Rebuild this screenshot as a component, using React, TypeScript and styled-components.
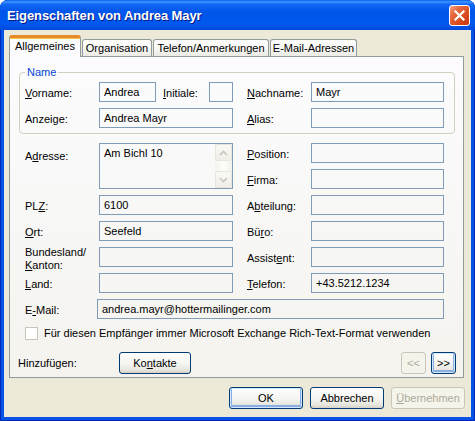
import React from "react";
import styled, { createGlobalStyle, css } from "styled-components";

const GlobalStyle = createGlobalStyle`
  html, body {
    margin: 0;
    padding: 0;
    background: #ffffff;
  }
  body {
    font-family: "Liberation Sans", Arial, sans-serif;
    font-size: 11px;
    line-height: 13px;
    color: #000;
  }
  * { box-sizing: border-box; }
`;

const Window = styled.div`
  width: 475px;
  height: 421px;
  display: flex;
  flex-direction: column;
  background: #0553e6;
  border-radius: 8px 8px 0 0;
  overflow: hidden;
  box-shadow: inset 0 0 0 1px #0029b8;
`;

const TitleBar = styled.div`
  height: 30px;
  flex: none;
  display: flex;
  align-items: center;
  padding: 1px 5px 0 7px;
  background: linear-gradient(
    180deg,
    #0a5ce6 0%,
    #3d95ff 6%,
    #1468f5 14%,
    #0055ea 40%,
    #0058ee 80%,
    #0048dc 100%
  );
`;

const Title = styled.span`
  font-family: "Liberation Sans", Arial, sans-serif;
  font-weight: bold;
  font-size: 13px;
  color: #ffffff;
  text-shadow: 1px 1px 0 #0a1883;
  letter-spacing: -0.1px;
`;

const CloseButton = styled.div`
  margin-left: auto;
  width: 21px;
  height: 21px;
  border: 1px solid #ffffff;
  border-radius: 3px;
  background: linear-gradient(135deg, #f0a589 0%, #e4683f 30%, #d9471c 70%, #c23a12 100%);
  display: flex;
  align-items: center;
  justify-content: center;
`;

const Body = styled.div`
  flex: 1;
  margin: 0 4px 4px;
  padding: 5px 7px 7px 5px;
  background: #ece9d8;
  display: flex;
  flex-direction: column;
`;

const TabStrip = styled.div`
  display: flex;
  align-items: flex-end;
  gap: 1px;
  height: 21px;
  position: relative;
  z-index: 1;
`;

const Tab = styled.div<{ $active?: boolean; $w: number }>`
  width: ${(p) => p.$w}px;
  display: flex;
  justify-content: center;
  border: 1px solid #919b9c;
  border-bottom: none;
  border-radius: 3px 3px 0 0;
  white-space: nowrap;
  ${(p) =>
    p.$active
      ? css`
          height: 22px;
          margin-bottom: -1px;
          align-items: flex-start;
          padding-top: 2px;
          background: #fcfcfe;
          border-top: 3px solid #e68b2c;
          box-shadow: inset 0 1px 0 #ffc73c;
        `
      : css`
          height: 17px;
          align-items: center;
          background: linear-gradient(180deg, #ffffff 0%, #f7f7f4 50%, #ecebe6 100%);
        `}
`;

const Panel = styled.div`
  border: 1px solid #919b9c;
  background: linear-gradient(180deg, #fcfcfe 0%, #f4f3ee 100%);
  display: flex;
  flex-direction: column;
  padding-bottom: 3px;
`;

const GroupBox = styled.div`
  position: relative;
  margin: 15px 8px 0 9px;
  border: 1px solid #d0d0bf;
  border-radius: 4px;
  padding: 9px 0 5px 5px;
`;

const GroupTitle = styled.span`
  position: absolute;
  top: -7px;
  left: 5px;
  padding: 0 2px;
  color: #0046d5;
  background: #fbfbfc;
`;

const FieldGrid = styled.div<{ $outside?: boolean }>`
  display: grid;
  grid-template-columns: 74px 134px 78px 133px;
  grid-auto-rows: 20px;
  row-gap: 6px;
  align-items: center;
  ${(p) =>
    p.$outside &&
    css`
      margin: 9px 0 0 15px;
    `}
`;

const Label = styled.div<{ $right?: boolean; $top?: number }>`
  grid-column: ${(p) => (p.$right ? 3 : 1)};
  padding-left: ${(p) => (p.$right ? 14 : 0)}px;
  white-space: nowrap;
  ${(p) =>
    p.$top !== undefined
      ? css`
          align-self: start;
          margin-top: ${p.$top}px;
        `
      : css`
          padding-top: 2px;
        `}
`;

const Field = styled.div<{ $right?: boolean; $wide?: boolean; $w?: number }>`
  grid-column: ${(p) => (p.$wide ? "2 / 5" : p.$right ? "4" : "2")};
  ${(p) =>
    p.$wide &&
    css`
      margin-left: -2px;
    `}
  width: ${(p) => (p.$w ? `${p.$w}px` : "auto")};
  height: 20px;
  border: 1px solid #7f9db9;
  padding: 0 4px;
  display: flex;
  align-items: center;
  white-space: nowrap;
  overflow: hidden;
`;

const NameCell = styled.div`
  grid-column: 2;
  display: flex;
  align-items: center;
`;

const InlineLabel = styled.span`
  margin-left: 7px;
  padding-top: 2px;
`;

const PushRight = styled.div`
  margin-left: auto;
`;

const AddressBox = styled.div`
  grid-column: 2;
  grid-row: span 2;
  align-self: stretch;
  border: 1px solid #7f9db9;
  display: flex;
`;

const AddressText = styled.div`
  flex: 1;
  padding: 3px 4px;
`;

const ScrollBar = styled.div`
  width: 17px;
  display: flex;
  flex-direction: column;
  justify-content: space-between;
  background: linear-gradient(90deg, #f3f2ec 0%, #fdfdfb 50%, #f3f2ec 100%);
`;

const ScrollButton = styled.div`
  width: 17px;
  height: 17px;
  border: 1px solid #e8e6dc;
  border-radius: 2px;
  background: linear-gradient(180deg, #f9f9f6 0%, #efeee8 100%);
  display: flex;
  align-items: center;
  justify-content: center;
`;

const CheckRow = styled.div`
  display: flex;
  align-items: center;
  gap: 6px;
  height: 13px;
  margin: 8px 0 0 15px;
`;

const CheckBox = styled.span`
  width: 13px;
  height: 13px;
  border: 1px solid #c8c6ba;
  background: #ffffff;
  flex: none;
`;

const ActionRow = styled.div`
  display: flex;
  align-items: center;
  height: 22px;
  margin-top: 12px;
  padding: 0 7px 0 8px;
`;

const AddLabel = styled.span`
  width: 101px;
`;

const NavGroup = styled.div`
  margin-left: auto;
  display: flex;
  gap: 5px;
`;

const Button = styled.div<{ $w: number; $default?: boolean; $disabled?: boolean }>`
  width: ${(p) => p.$w}px;
  height: 22px;
  border: 1px solid #003c74;
  border-radius: 3px;
  background: linear-gradient(180deg, #ffffff 0%, #f4f4f0 55%, #e6e5dd 85%, #d6d0c5 100%);
  display: flex;
  align-items: center;
  justify-content: center;
  white-space: nowrap;
  ${(p) =>
    p.$default &&
    css`
      box-shadow: inset 0 0 0 1px #cee7ff, inset 0 -1px 0 2px #89ade4;
    `}
  ${(p) =>
    p.$disabled &&
    css`
      border-color: #c9c7ba;
      background: #f5f4ea;
      color: #aca899;
    `}
`;

const Footer = styled.div`
  display: flex;
  justify-content: flex-end;
  gap: 7px;
  margin: 9px -1px 0 0;
`;

const Arrow = ({ up }: { up?: boolean }) => (
  <svg width="9" height="6" viewBox="0 0 9 6">
    <path
      d={up ? "M1 5 L4.5 1.5 L8 5" : "M1 1 L4.5 4.5 L8 1"}
      fill="none"
      stroke="#c9c7bb"
      strokeWidth="1.6"
    />
  </svg>
);

const App = () => {
  return (
    <>
      <GlobalStyle />
      <Window>
        <TitleBar>
          <Title>Eigenschaften von Andrea Mayr</Title>
          <CloseButton>
            <svg width="13" height="13" viewBox="0 0 13 13">
              <path d="M2.5 2.5 L10.5 10.5 M10.5 2.5 L2.5 10.5" stroke="#ffffff" strokeWidth="2.2" strokeLinecap="square" />
            </svg>
          </CloseButton>
        </TitleBar>
        <Body>
          <TabStrip>
            <Tab $active $w={72}>Allgemeines</Tab>
            <Tab $w={70}>Organisation</Tab>
            <Tab $w={116}>Telefon/Anmerkungen</Tab>
            <Tab $w={87}>E-Mail-Adressen</Tab>
          </TabStrip>
          <Panel>
            <GroupBox>
              <GroupTitle>Name</GroupTitle>
              <FieldGrid>
                <Label><u>V</u>orname:</Label>
                <NameCell>
                  <Field $w={57}>Andrea</Field>
                  <InlineLabel><u>I</u>nitiale:</InlineLabel>
                  <PushRight>
                    <Field $w={24} />
                  </PushRight>
                </NameCell>
                <Label $right><u>N</u>achname:</Label>
                <Field $right>Mayr</Field>
                <Label>Anzeige:</Label>
                <Field>Andrea Mayr</Field>
                <Label $right><u>A</u>lias:</Label>
                <Field $right />
              </FieldGrid>
            </GroupBox>
            <FieldGrid $outside>
              <Label $top={7}>A<u>d</u>resse:</Label>
              <AddressBox>
                <AddressText>Am Bichl 10</AddressText>
                <ScrollBar>
                  <ScrollButton><Arrow up /></ScrollButton>
                  <ScrollButton><Arrow /></ScrollButton>
                </ScrollBar>
              </AddressBox>
              <Label $right><u>P</u>osition:</Label>
              <Field $right />
              <Label $right><u>F</u>irma:</Label>
              <Field $right />
              <Label>PL<u>Z</u>:</Label>
              <Field>6100</Field>
              <Label $right>A<u>b</u>teilung:</Label>
              <Field $right />
              <Label><u>O</u>rt:</Label>
              <Field>Seefeld</Field>
              <Label $right>Bü<u>r</u>o:</Label>
              <Field $right />
              <Label $top={-1}>
                Bundesland/
                <br />
                <u>K</u>anton:
              </Label>
              <Field />
              <Label $right>Assist<u>e</u>nt:</Label>
              <Field $right />
              <Label><u>L</u>and:</Label>
              <Field />
              <Label $right><u>T</u>elefon:</Label>
              <Field $right>+43.5212.1234</Field>
              <Label>E<u>-</u>Mail:</Label>
              <Field $wide>andrea.mayr@hottermailinger.com</Field>
            </FieldGrid>
            <CheckRow>
              <CheckBox />
              <span>Für diesen Empfänger immer Microsoft Exchange Rich-Text-Format verwenden</span>
            </CheckRow>
            <ActionRow>
              <AddLabel>Hinzufügen:</AddLabel>
              <Button $w={72}>Ko<u>n</u>takte</Button>
              <NavGroup>
                <Button $w={25} $disabled>&lt;&lt;</Button>
                <Button $w={25} $default>&gt;&gt;</Button>
              </NavGroup>
            </ActionRow>
          </Panel>
          <Footer>
            <Button $w={74} $default>OK</Button>
            <Button $w={74}>Abbrechen</Button>
            <Button $w={74} $disabled><u>Ü</u>bernehmen</Button>
          </Footer>
        </Body>
      </Window>
    </>
  );
};

export default App;
